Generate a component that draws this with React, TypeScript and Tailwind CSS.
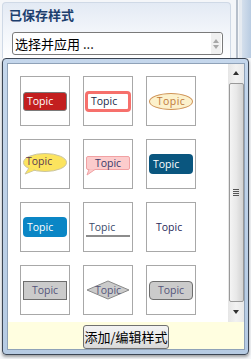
import React from 'react';

const cjk = "font-['Microsoft_YaHei','Noto_Sans_CJK_SC',sans-serif]";
const latin = "font-['Open_Sans','Noto_Sans',sans-serif]";

const Cell: React.FC<{ children: React.ReactNode }> = ({ children }) => (
  <div className="w-[50px] h-[50px] border border-[#a8a8a8] bg-white flex items-center justify-center relative">
    {children}
  </div>
);

const Bubble: React.FC<{ fill: string; stroke: string; round?: boolean; text: string }> = ({ fill, stroke, round, text }) => (
  <div className="relative w-[44px] h-[22px]">
    <svg width="44" height="22" viewBox="0 0 44 22" className="absolute inset-0">
      {round ? (
        <>
          <ellipse cx="22" cy="9.5" rx="21.5" ry="9" fill={fill} stroke={stroke} />
          <path d="M6 15 L2 21 L12 17" fill={fill} stroke={stroke} />
          <path d="M6.5 15 L3.5 20 L11 17 Z" fill={fill} />
        </>
      ) : (
        <>
          <rect x="0.5" y="0.5" width="43" height="13" rx="1.5" fill={fill} stroke={stroke} />
          <path d="M3 13.5 L1 19 L9 13.5" fill={fill} stroke={stroke} />
          <rect x="3.5" y="12" width="5" height="1.5" fill={fill} />
        </>
      )}
    </svg>
    <span className={`absolute left-0 right-0 ${round ? 'top-[2px]' : 'top-[1px]'} text-center text-[10.5px] leading-[13px] ${text}`}>Topic</span>
  </div>
);

const App: React.FC = () => {
  return (
    <div className={`w-[251px] h-[359px] bg-[#f4f6f9] overflow-hidden ${latin}`}>
      {/* saved styles panel */}
      <div className="flex h-[58px]">
        <div className="ml-[2px] mt-[2px] w-[229px] rounded-t-[4px] border border-b-0 border-[#cfd9e6] bg-gradient-to-b from-[#e3eaf4] via-[#f2f5fa] to-white">
          <div className={`h-[23px] pl-[6px] pt-[3px] text-[13px] leading-[17px] font-bold text-[#1d3f6e] ${cjk}`}>已保存样式</div>
          <div className="ml-[9px] mt-[6px] w-[211px] h-[23px] rounded-[3px] border border-[#7a7a7a] bg-white flex items-center">
            <span className={`pl-[2px] flex-1 text-[13px] text-black ${cjk}`}>选择并应用 ...</span>
            <div className="w-[10px] h-[21px] mr-[1px] bg-[#f0f0f0] flex flex-col items-center justify-center gap-[2px]">
              <div className="w-0 h-0 border-x-[3.5px] border-x-transparent border-b-[4px] border-b-[#a8a8a8]" />
              <div className="w-0 h-0 border-x-[3.5px] border-x-transparent border-t-[4px] border-t-[#a8a8a8]" />
            </div>
          </div>
        </div>
        <div className="ml-[5px] w-[2px] bg-[#b6bfcb]" />
        <div className="ml-[1px] w-[3px] bg-[#e6ebf1]" />
        <div className="w-[9px] bg-gradient-to-r from-[#d4dfec] to-[#b9cce2]" />
      </div>

      {/* popup */}
      <div className="ml-[2px] w-[247px] h-[297px] rounded-[4px] border border-[#3c4654] bg-gradient-to-b from-[#c5d7ec] to-[#b6cbe3] p-[4px] pr-[3px] shadow-[0_2px_3px_rgba(0,0,0,0.35)]">
        <div className="w-[238px] h-[287px] border border-[#8fa2b8] flex flex-col">
          <div className="flex h-[258px]">
            <div className="w-[220px] bg-white pl-[12px] pt-[12px]">
              <div className="grid grid-cols-[50px_50px_50px] gap-[13px]">
                <Cell>
                  <div className="w-[44px] h-[19px] rounded-[3px] border border-[#7a7a7a] bg-[#c31f1f] text-white text-[10.5px] leading-[17px] pl-[3px]">Topic</div>
                </Cell>
                <Cell>
                  <div className="w-[46px] h-[21px] rounded-[4px] border-[3px] border-[#f6706c] bg-white text-[#1a2a4a] text-[10.5px] leading-[15px] pl-[3px]">Topic</div>
                </Cell>
                <Cell>
                  <div className="w-[44px] h-[17px] rounded-[50%] border border-[#cf9458] bg-[#fcf1cc] text-[#c07a3c] text-[10.5px] leading-[15px] text-center tracking-[0.5px]">Topic</div>
                </Cell>

                <Cell>
                  <Bubble round fill="#fce45e" stroke="#c9c4a0" text="text-[#5a3a50] pl-[3px] !text-left" />
                </Cell>
                <Cell>
                  <div className="mt-[5px]">
                    <Bubble fill="#fccccc" stroke="#f1a1a3" text="text-[#3a3a6a]" />
                  </div>
                </Cell>
                <Cell>
                  <div className="w-[44px] h-[20px] rounded-[4px] bg-[#0a567f] text-white text-[10.5px] leading-[20px] pl-[4px]">Topic</div>
                </Cell>

                <Cell>
                  <div className="w-[44px] h-[20px] rounded-[4px] bg-[#0a86c5] text-white text-[10.5px] leading-[20px] pl-[4px]">Topic</div>
                </Cell>
                <Cell>
                  <div className="w-[44px] h-[18px] border-b-[2px] border-[#8c8c8c] text-[#3a4a6a] text-[10.5px] leading-[16px] pl-[3px] mt-[2px]">Topic</div>
                </Cell>
                <Cell>
                  <div className="w-[44px] text-[#2a2a5a] text-[10.5px] leading-[16px] pl-[7px]">Topic</div>
                </Cell>

                <Cell>
                  <div className="w-[44px] h-[19px] border border-[#6e6e6e] bg-[#cbcbcb] text-[#55557a] text-[10.5px] leading-[17px] text-center">Topic</div>
                </Cell>
                <Cell>
                  <div className="relative w-[44px] h-[20px]">
                    <svg width="44" height="20" viewBox="0 0 44 20" className="absolute inset-0">
                      <polygon points="1,10 22,1 43,10 22,19" fill="#cbcbcb" stroke="#8a8a8a" />
                    </svg>
                    <span className="absolute inset-0 text-center text-[10.5px] leading-[20px] text-[#55557a]">Topic</span>
                  </div>
                </Cell>
                <Cell>
                  <div className="w-[44px] h-[19px] rounded-[4px] border border-[#6e6e6e] bg-[#cbcbcb] text-[#55557a] text-[10.5px] leading-[17px] text-center">Topic</div>
                </Cell>
              </div>
            </div>

            {/* scrollbar */}
            <div className="w-[16px] bg-gradient-to-r from-[#e6e6e6] via-[#f2f2f2] to-[#e8e8e8] flex flex-col items-center">
              <div className="h-[18px] flex items-center justify-center">
                <div className="w-0 h-0 border-x-[3.5px] border-x-transparent border-b-[4px] border-b-[#303030]" />
              </div>
              <div className="mt-[1px] w-[15px] h-[219px] rounded-[2px] border border-[#999] bg-gradient-to-r from-[#f4f4f4] via-[#e8e8e8] to-[#d2d2d2] flex flex-col items-center justify-center gap-[1px]">
                <div className="w-[6px] h-[1px] bg-[#555]" />
                <div className="w-[6px] h-[1px] bg-[#555]" />
                <div className="w-[6px] h-[1px] bg-[#555]" />
                <div className="w-[6px] h-[1px] bg-[#555]" />
              </div>
              <div className="flex-1 flex items-center justify-center">
                <div className="w-0 h-0 border-x-[3.5px] border-x-transparent border-t-[4px] border-t-[#303030]" />
              </div>
            </div>
          </div>

          {/* bottom bar */}
          <div className="flex-1 bg-[#fffee0] flex items-start justify-center pt-[3px]">
            <button className={`w-[86px] h-[24px] rounded-[3px] border border-[#707070] bg-gradient-to-b from-[#f3f3f3] via-[#ebebeb] to-[#d8d8d8] text-[13px] leading-[20px] text-black ${cjk}`}>
              添加/编辑样式
            </button>
          </div>
        </div>
      </div>
    </div>
  );
};

export default App;
